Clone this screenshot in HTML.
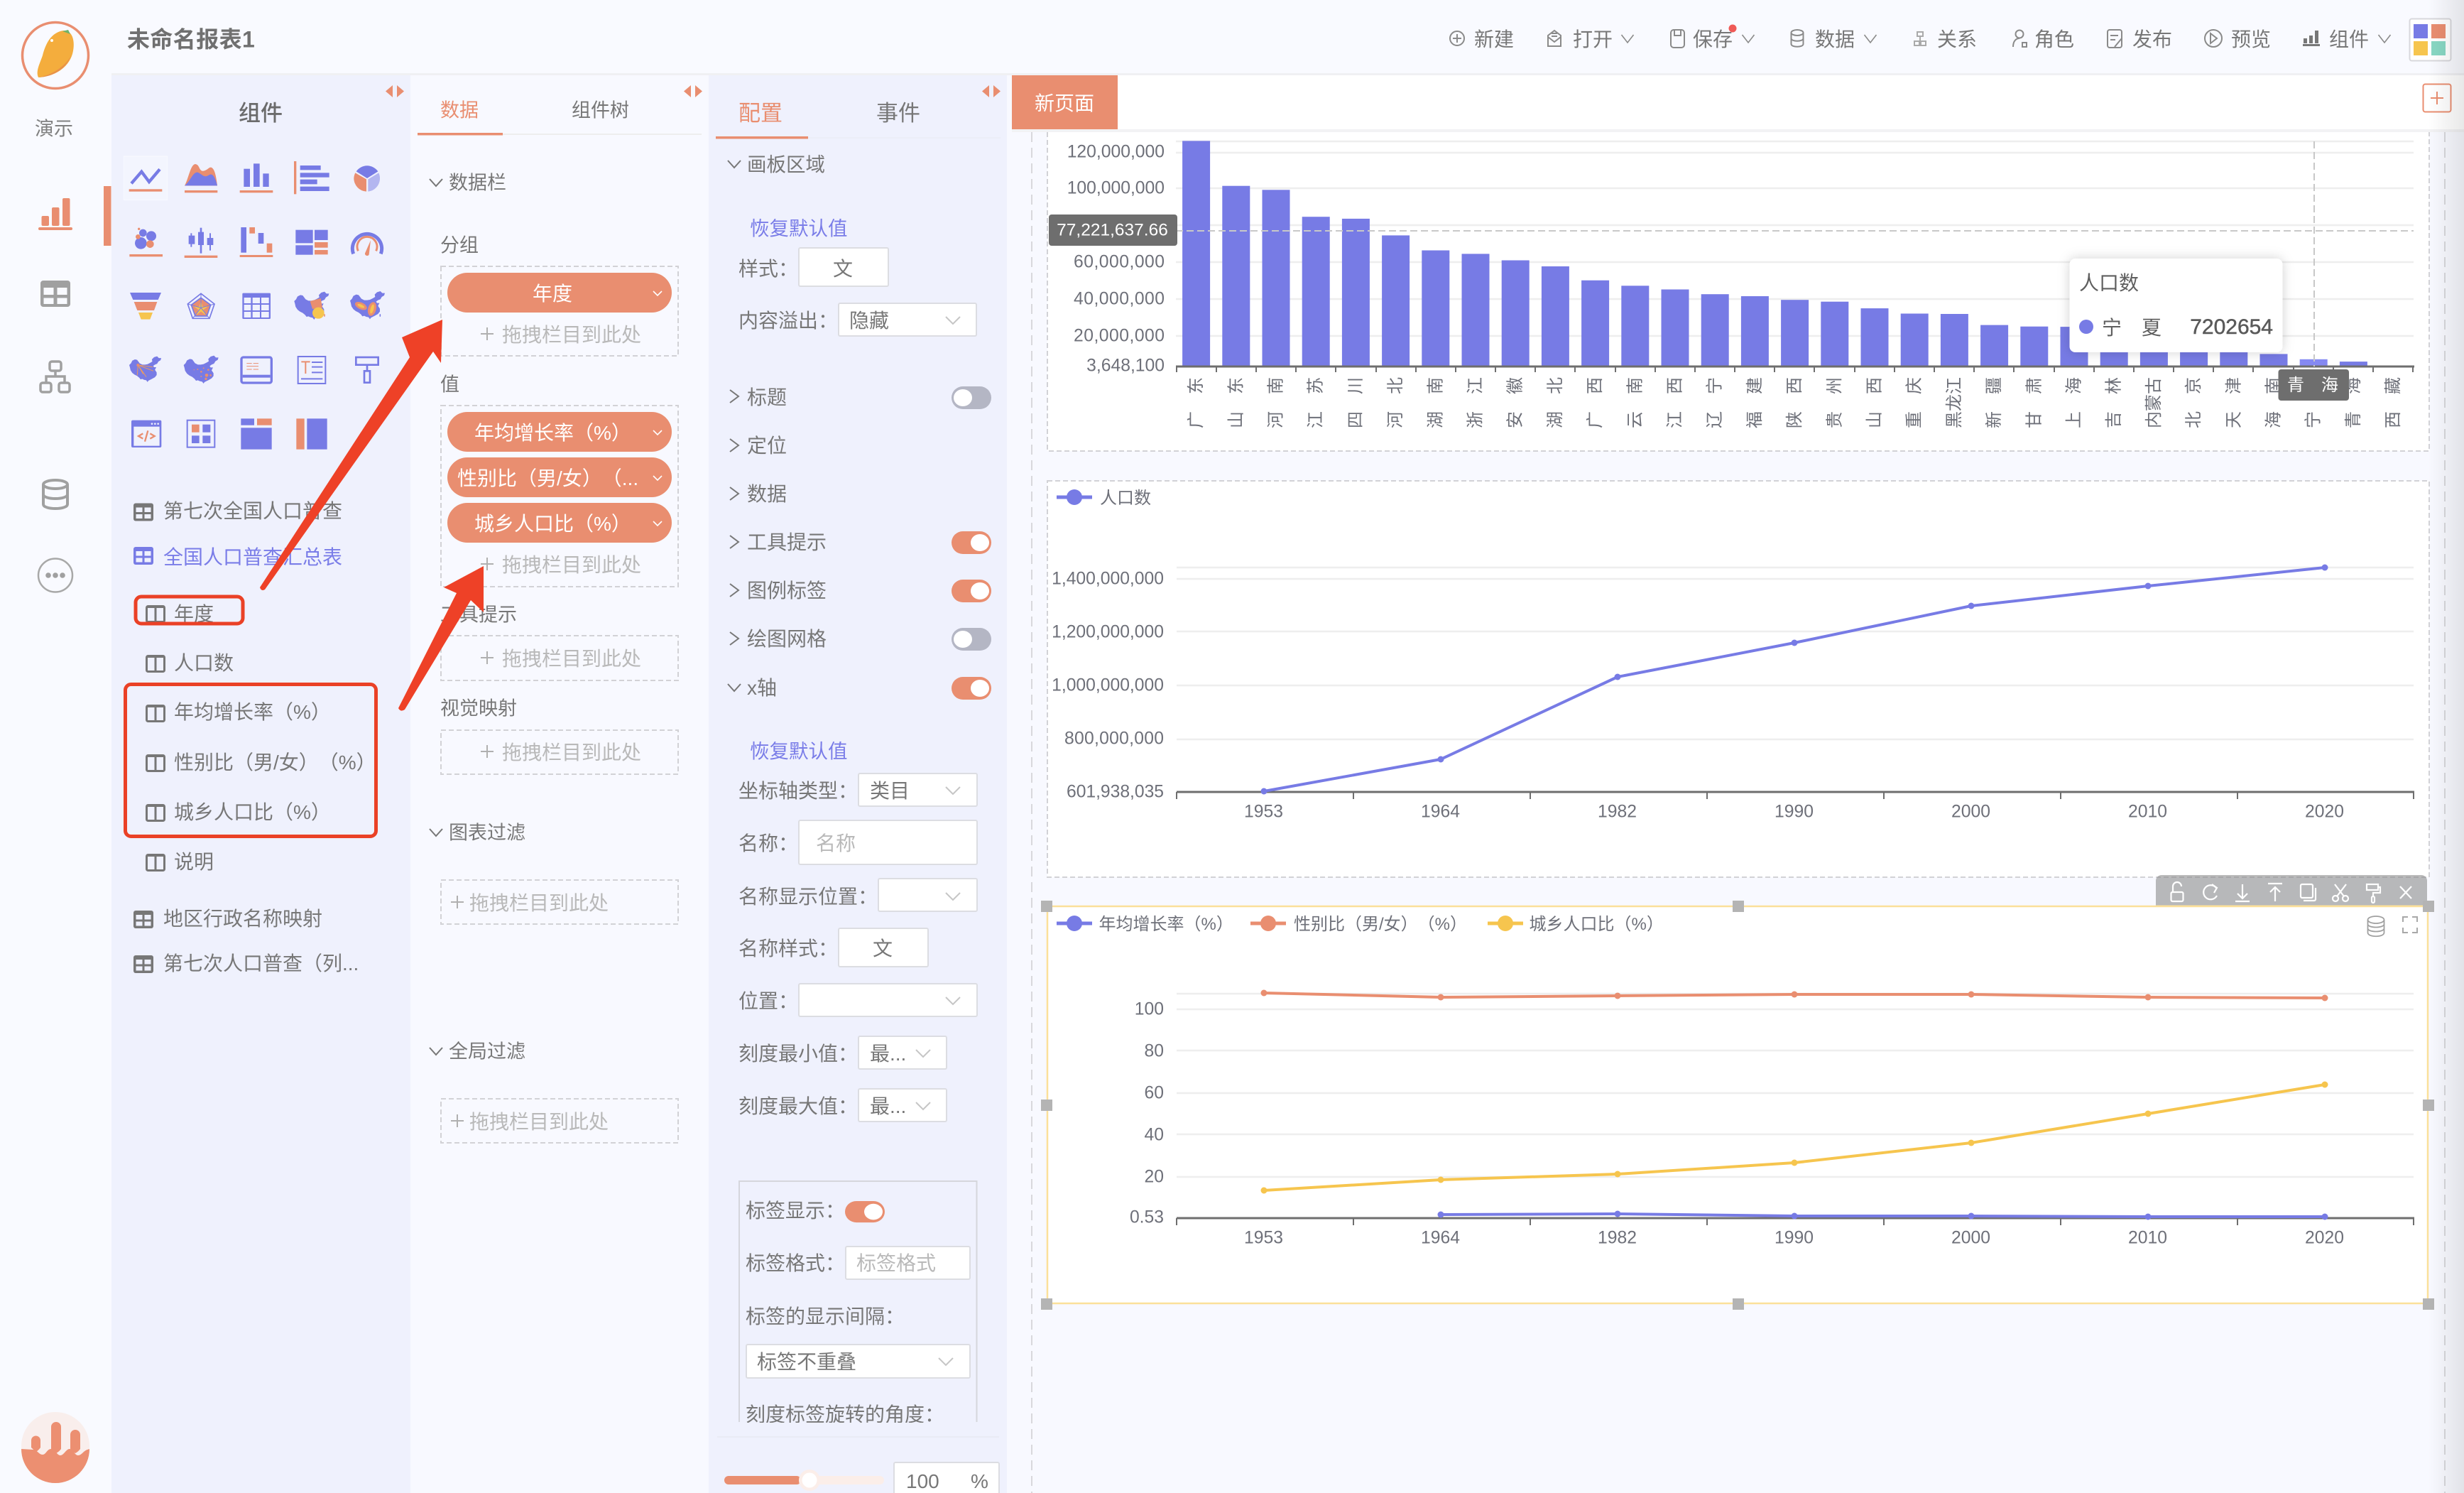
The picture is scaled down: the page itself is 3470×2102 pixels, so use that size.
<!DOCTYPE html>
<html lang="zh-CN"><head><meta charset="utf-8"><title>未命名报表1</title>
<style>
html,body{margin:0;padding:0;background:#f8f9ff}
svg{display:block}
svg text{font-family:"Liberation Sans","Noto Sans CJK SC",sans-serif;dominant-baseline:central;fill:#777;font-size:28px;text-spacing-trim:space-all}
svg text:not(.cat):not(.ax):not(.tk){transform:translate(-1px,1.5px)}
.o{fill:#e98e70}.b{fill:#777be5}
.ph text,text.ph{fill:#b9b9b9}
text.bl{fill:#7a7de8}
text.ax{font-size:24.7px;text-anchor:end;fill:#6e7079}
text.tk{font-size:24.7px;text-anchor:middle;fill:#6e7079;transform:translateX(-1.5px)}
text.cat{font-size:24px;text-anchor:end;fill:#6e7079}
text.lg{font-size:24px;fill:#6e7079}
text.wh{fill:#fff}
text.mid{text-anchor:middle}
.shx{transform:translateX(-1px)}
.ln{fill:none;stroke-linejoin:round}
.grid{stroke:#eeeeee;stroke-width:2.4}
.dash{fill:none;stroke:#d2d2d6;stroke-width:2;stroke-dasharray:7 4}
.box{fill:#fff;stroke:#dcdde2;stroke-width:2}
.chev{fill:none;stroke:#c6c6c6;stroke-width:2}
.tchev{fill:none;stroke:#8a8a8a;stroke-width:1.6}
.car{fill:none;stroke:#777;stroke-width:2}
.tool{fill:none;stroke:#fff;stroke-width:2.2}
.top{fill:none;stroke:#8a8a8a;stroke-width:2}
</style></head><body>
<svg xmlns="http://www.w3.org/2000/svg" width="3470" height="2102" viewBox="0 0 3470 2102">
<defs>
<g id="tb"><rect x="0" y="0" width="28" height="25" rx="3" fill="#777"/><rect x="3.5" y="6" width="9" height="6.5" fill="#eff1fd"/><rect x="15.5" y="6" width="9" height="6.5" fill="#eff1fd"/><rect x="3.5" y="15.5" width="9" height="6" fill="#eff1fd"/><rect x="15.5" y="15.5" width="9" height="6" fill="#eff1fd"/></g>
<g id="col"><rect x="1.5" y="1.5" width="25" height="22" rx="2" fill="none" stroke="#777" stroke-width="3"/><path d="M14 1v24" stroke="#777" stroke-width="3"/><path d="M1 3h26" stroke="#777" stroke-width="2"/></g>
<polyline id="chev" class="chev" points="-10,-5 0,5 10,-5"/>
<polyline id="cd" class="car" points="-9,-6 0,4 9,-6"/>
<polyline id="cr" class="car" points="-6,-9 6,0 -6,9"/>
<g id="lc"><path d="M-6 0 L0 6 L6 0" fill="none" stroke="#fff" stroke-width="1.6"/></g>
<g id="triL"><path d="M10 0V17L0 8.5Z" fill="#e98e70"/><path d="M16 0V17L26 8.5Z" fill="#e98e70"/></g>
<g id="ton"><rect x="0" y="0" width="56" height="32" rx="16" fill="#e98e70"/><ellipse cx="40" cy="16" rx="13" ry="12" fill="#fff"/></g>
<g id="tof"><rect x="0" y="0" width="56" height="32" rx="16" fill="#b4b6c4"/><ellipse cx="16" cy="16" rx="13" ry="12" fill="#fff"/></g>
<path id="cn" d="M0 40L8 32L14 20L26 14L36 16L42 24L48 32L60 38L72 38L84 36L96 30L106 24L104 14L114 4L128 0L136 8L147 8L144 18L134 24L128 34L118 38L110 44L114 50L124 50L118 62L126 74L126 86L118 96L104 104L96 108L88 112L84 118L78 110L68 108L60 104L52 106L46 98L36 90L24 84L14 76L6 64L3 50Z"/>
</defs>

<!-- base backgrounds -->
<rect width="3470" height="2102" fill="#f8f9ff"/>
<rect x="0" y="0" width="157" height="2102" fill="#f9faff"/>
<rect x="157" y="0" width="3313" height="104" fill="#f9faff"/>
<rect x="157" y="103" width="3313" height="3" fill="#f0f0f3"/>
<rect x="157" y="106" width="421" height="1996" fill="#eff1fd"/>
<rect x="578" y="106" width="420" height="1996" fill="#f8f9ff"/>
<rect x="998" y="106" width="420" height="1996" fill="#eff1fd"/>

<!-- left rail -->
<circle cx="78" cy="78" r="46.5" fill="none" stroke="#e98e70" stroke-width="3.5"/>
<path d="M54 109C50 100 56 90 60 78C64 62 72 45 90 43C104 43 106 62 102 76C96 96 76 108 54 109Z" fill="#f4ad3d"/>
<path d="M54 109C72 106 92 94 100 78C94 96 76 108 54 109Z" fill="#e8914a"/>
<path d="M88 44L96 42L99 48Z" fill="#6fb36a"/><circle cx="73" cy="57" r="2" fill="#fff"/>
<text x="77" y="180" font-size="27" text-anchor="middle" style="font-size:27px;fill:#808080">演示</text>
<rect x="146" y="262" width="10.500" height="84" fill="#e98e70"/>
<rect x="58.500" y="304" width="10.500" height="14" rx="2" fill="#e98e70"/><rect x="73" y="292" width="10.500" height="26" rx="2" fill="#e98e70"/><rect x="88" y="279" width="10.500" height="39" rx="2" fill="#e98e70"/><rect x="54" y="320" width="48" height="4" rx="2" fill="#e98e70"/>
<rect x="57" y="395" width="42" height="37" rx="4" fill="#a0a0a0"/><rect x="61.500" y="405" width="14" height="10" fill="#f9faff"/><rect x="80.500" y="405" width="14" height="10" fill="#f9faff"/><rect x="61.500" y="419.500" width="14" height="8.500" fill="#f9faff"/><rect x="80.500" y="419.500" width="14" height="8.500" fill="#f9faff"/>
<g fill="none" stroke="#a0a0a0" stroke-width="3.500"><rect x="70" y="509" width="16" height="13" rx="3"/><rect x="57" y="539" width="15" height="13" rx="3"/><rect x="83" y="539" width="15" height="13" rx="3"/><path d="M78 522v8M65 538v-8h26v8"/></g>
<g fill="none" stroke="#a0a0a0" stroke-width="4"><ellipse cx="78" cy="682" rx="17" ry="6"/><path d="M61 682v28c0 8 34 8 34 0v-28M61 696c0 8 34 8 34 0"/></g>
<ellipse cx="78" cy="810" rx="24" ry="23.500" fill="none" stroke="#a8a8a8" stroke-width="2.500"/><circle cx="68" cy="810" r="3.800" fill="#a0a0a0"/><circle cx="78" cy="810" r="3.800" fill="#a0a0a0"/><circle cx="88" cy="810" r="3.800" fill="#a0a0a0"/>
<circle cx="78" cy="2036" r="48" fill="#f9eeec"/>
<path d="M30 2040a48 48 0 0 0 96 0l-3 1c-6 2-8 8-13 8s-7-9-12-9-8 9-13 9-7-9-13-9-7 8-12 8-7-6-13-7z" fill="#ec8f71"/>
<path d="M44 2040v-10a6.500 6.500 0 0 1 13 0v10q-2 3-6 6-4-3-7-6z" fill="#ec8f71" transform="translate(0 -2)"/>
<path d="M72 2040v-31a7 7 0 0 1 14 0v31q-3 4-7 6-4-2-7-6z" fill="#ec8f71"/>
<path d="M99 2040v-20a7 7 0 0 1 14 0v20q-3 4-7 6-4-2-7-6z" fill="#ec8f71"/>

<!-- top bar -->
<text x="180" y="54" style="font-size:32px;font-weight:bold;fill:#707070;letter-spacing:.4px">未命名报表1</text>
<g>
<circle cx="2052" cy="54" r="10" class="top"/><path d="M2046 54h12M2052 48v12" class="top"/><text x="2077" y="54">新建</text>
<path d="M2180 50l9-7 9 7v15h-18zM2180 52l9 7 9-7M2185 47h8M2185 51h8" class="top"/><text x="2216" y="54">打开</text><polyline class="tchev" points="2283.500,49 2292,60 2300.500,49"/>
<rect x="2353" y="42" width="19" height="25" rx="4" class="top"/><rect x="2358" y="42" width="9" height="8" class="top"/><text x="2385" y="54">保存</text><circle cx="2440" cy="40" r="5.500" fill="#ef5a57"/><polyline class="tchev" points="2453.500,49 2462,60 2470.500,49"/>
<ellipse cx="2531" cy="46" rx="8.500" ry="4" class="top"/><path d="M2522.500 46v16c0 5 17 5 17 0v-16M2522.500 54c0 5 17 5 17 0" class="top"/><text x="2557" y="54">数据</text><polyline class="tchev" points="2625.500,49 2634,60 2642.500,49"/>
<g class="top" style="stroke:#aaa"><rect x="2700" y="45" width="8" height="6"/><rect x="2696" y="58" width="7" height="6"/><rect x="2705" y="58" width="7" height="6"/><path d="M2704 51v7"/></g><text x="2729" y="54">关系</text>
<circle cx="2844" cy="48" r="5.500" class="top"/><path d="M2835 66c0-8 4-12 9-12M2848 60h6v6h-6z" class="top"/><text x="2866" y="54">角色</text>
<rect x="2968" y="42" width="20" height="25" rx="3" class="top"/><path d="M2972 50h11M2972 56h7M2978 66l10-12" class="top"/><text x="3004" y="54">发布</text>
<circle cx="3117" cy="54" r="12" class="top"/><path d="M3113 47l9 7-9 7z" class="top"/><text x="3143" y="54">预览</text>
<rect x="3243" y="62" width="24" height="3" fill="#777"/><rect x="3244" y="54" width="5" height="7" fill="#777"/><rect x="3252" y="50" width="5" height="11" fill="#777"/><rect x="3260" y="43" width="5" height="18" fill="#777"/><text x="3281" y="54">组件</text><polyline class="tchev" points="3349.500,49 3358,60 3366.500,49"/>
</g>
<rect x="3393.500" y="26.500" width="58" height="59" rx="3" fill="#fff" stroke="#d8d8dc" stroke-width="2"/>
<rect x="3399" y="34" width="20" height="20" fill="#777be5"/><rect x="3424" y="34" width="20" height="20" fill="#e98e70"/><rect x="3399" y="58" width="20" height="20" fill="#f6c54e"/><rect x="3424" y="58" width="20" height="20" fill="#88d7c3"/>

<!-- component panel -->
<use href="#triL" x="543" y="120"/>
<text x="337" y="158" style="font-size:31px;font-weight:500;fill:#6b6b6b">组件</text>
<g transform="translate(140 200) scale(.33333)">
<rect x="103" y="60" width="184" height="185" fill="#f3f5fe" stroke="#f8f9ff" stroke-width="3"/>
<polyline points="135,175 178,125 210,168 255,115" fill="none" stroke="#777be5" stroke-width="13"/>
<g class="o"><rect x="125" y="199" width="140" height="10"/><rect x="360" y="204" width="139" height="10"/><rect x="593" y="204" width="140" height="10"/><rect x="822" y="81" width="10" height="139"/><rect x="127" y="474" width="140" height="10"/><rect x="359" y="479" width="140" height="10"/><rect x="593" y="477" width="140" height="9"/><rect x="634" y="360" width="23" height="26"/><rect x="707" y="428" width="23" height="39"/><rect x="909" y="423" width="56" height="23"/><rect x="909" y="456" width="56" height="19"/><rect x="832" y="1168" width="34" height="130"/><rect x="666" y="1168" width="62" height="28"/><rect x="390" y="1193" width="32" height="33"/></g>
<path d="M360 184C378 150 385 95 405 93C425 95 420 125 440 122C460 118 465 100 477 110C490 120 495 160 498 184Z" class="o"/>
<path d="M360 184C385 165 395 125 415 128C435 135 440 155 465 138C482 130 492 160 498 184Z" class="b"/>
<g class="b"><rect x="610" y="113" width="26" height="76"/><rect x="651" y="91" width="26" height="98"/><rect x="691" y="133" width="25" height="56"/>
<rect x="848" y="99" width="87" height="19"/><rect x="848" y="130" width="123" height="19"/><rect x="848" y="158" width="72" height="20"/><rect x="848" y="188" width="123" height="19"/>
<circle cx="184" cy="384" r="16"/><circle cx="219" cy="397" r="21"/><circle cx="175" cy="427" r="25"/>
<rect x="385" y="385" width="6" height="58"/><rect x="377" y="395" width="26" height="36"/><rect x="425" y="362" width="8" height="108"/><rect x="417" y="380" width="24" height="55"/><rect x="465" y="385" width="6" height="73"/><rect x="455" y="405" width="26" height="30"/>
<rect x="598" y="360" width="23" height="107"/><rect x="671" y="384" width="23" height="45"/>
<rect x="829" y="371" width="73" height="56"/><rect x="829" y="436" width="73" height="40"/><rect x="909" y="371" width="56" height="43"/>
<rect x="598" y="1168" width="56" height="28"/><rect x="598" y="1207" width="130" height="91"/><rect x="877" y="1168" width="85" height="130"/>
</g>
<path d="M1131 153L1085 124A56 56 0 0 1 1177 124Z" class="b"/><path d="M1128 157L1128 209A56 56 0 0 1 1075 153A55 55 0 0 1 1081 130Z" class="o"/><path d="M1135 157L1180 130A56 56 0 0 1 1135 209Z" fill="#b3b6f0"/>
<circle cx="163" cy="400" r="10" class="o"/><circle cx="214" cy="431" r="16" class="o"/><circle cx="167" cy="367" r="5" class="o"/>
<path d="M1073 472A62 62 0 1 1 1189 472" fill="none" stroke="#777be5" stroke-width="15"/><path d="M1093 460A42 42 0 1 1 1169 460" fill="none" stroke="#e98e70" stroke-width="9"/><path d="M1146 415L1122 470A9 9 0 0 0 1139 475Z" class="o"/>
<path d="M129 636H261L248 666H142Z" class="b"/><path d="M146 675H244L231 711H160Z" class="o"/><path d="M165 720H225L214 749H176Z" fill="#f6c54e"/>
<path d="M429 640L486 684L465 745H394L373 684Z" fill="none" stroke="#777be5" stroke-width="5"/><path d="M429 658L470 688L454 735H405L388 688Z" fill="#e98e70" stroke="#777be5" stroke-width="5"/><path d="M429 672L436 695H458L440 708L448 730L429 716L410 730L418 708L400 695H422Z" fill="#f6c54e"/><path d="M429 640V700M373 684L429 700M486 684L429 700M394 745L429 700M465 745L429 700" stroke="#777be5" stroke-width="3"/>
<rect x="604" y="638" width="119" height="109" rx="4" class="b"/><g fill="#eff1fd"><rect x="611" y="657" width="29" height="24"/><rect x="647" y="657" width="31" height="24"/><rect x="684" y="657" width="32" height="24"/><rect x="611" y="687" width="29" height="24"/><rect x="647" y="687" width="31" height="24"/><rect x="684" y="687" width="32" height="24"/><rect x="611" y="717" width="29" height="24"/><rect x="647" y="717" width="31" height="24"/><rect x="684" y="717" width="32" height="24"/></g>
<use href="#cn" x="823" y="632" class="b"/><path d="M890 672L935 660L942 700L900 705Z" class="o"/><ellipse cx="925" cy="722" rx="25" ry="24" fill="#f6c54e"/><ellipse cx="951" cy="732" rx="2.500" ry="6" class="o"/>
<use href="#cn" x="1059" y="630" class="b"/><ellipse cx="1105" cy="692" rx="27" ry="14" transform="rotate(25 1105 692)" fill="#e98e70"/><ellipse cx="1105" cy="692" rx="16" ry="6" transform="rotate(25 1105 692)" fill="#f6c54e"/><ellipse cx="1152" cy="705" rx="17" ry="30" transform="rotate(15 1152 705)" fill="#e98e70"/><ellipse cx="1152" cy="705" rx="7" ry="20" transform="rotate(15 1152 705)" fill="#f6c54e"/><ellipse cx="1186" cy="732" rx="2.500" ry="6" class="b"/>
<use href="#cn" transform="translate(126 905) scale(.92)" class="b"/><path d="M163 942L225 950M163 942L228 967M163 942L198 992M163 942L160 985M163 942L185 980" stroke="#ec9a5f" stroke-width="3"/><circle cx="163" cy="942" r="6" class="o"/>
<use href="#cn" x="356" y="902" class="b"/><g class="o"><circle cx="453" cy="985" r="7"/><circle cx="430" cy="970" r="4"/><circle cx="460" cy="962" r="4"/><circle cx="440" cy="955" r="3"/><circle cx="470" cy="985" r="4"/><circle cx="450" cy="1000" r="5"/><circle cx="415" cy="960" r="3"/><circle cx="400" cy="962" r="2"/><circle cx="430" cy="990" r="3"/></g>
<rect x="600" y="909" width="127" height="108" rx="8" fill="none" stroke="#777be5" stroke-width="10"/><rect x="605" y="983" width="117" height="12" class="b"/><path d="M622 935h22M650 935h22M622 947h50M622 960h22M650 960h22" stroke="#e98e70" stroke-width="3"/>
<rect x="839" y="906" width="116" height="114" fill="none" stroke="#777be5" stroke-width="6"/><path d="M853 928h37M871 928v50" stroke="#e98e70" stroke-width="6"/><path d="M897 930h46M897 950h46M897 973h46M852 1000h91" stroke="#777be5" stroke-width="6"/>
<rect x="1084" y="909" width="94" height="32" fill="none" stroke="#777be5" stroke-width="8"/><rect x="1119" y="967" width="24" height="49" fill="none" stroke="#777be5" stroke-width="8"/><path d="M1131 943v24" stroke="#777be5" stroke-width="8"/>
<rect x="135" y="1175" width="127" height="115" rx="6" class="b"/><rect x="145" y="1202" width="109" height="81" fill="#eff1fd"/><circle cx="222" cy="1190" r="4" fill="#eff1fd"/><circle cx="235" cy="1190" r="4" fill="#eff1fd"/><circle cx="248" cy="1190" r="4" fill="#eff1fd"/><path d="M184 1231L165 1242L184 1253M214 1231L233 1242L214 1253M205 1219L192 1265" fill="none" stroke="#e98e70" stroke-width="7"/>
<rect x="371" y="1175" width="116" height="114" fill="none" stroke="#777be5" stroke-width="6"/><rect x="436" y="1193" width="33" height="33" class="b"/><rect x="390" y="1240" width="32" height="32" class="b"/><rect x="436" y="1240" width="33" height="32" class="b"/>
</g>
<!-- tree -->
<use href="#tb" x="188" y="708.500"/><text x="231" y="718">第七次全国人口普查</text>
<rect x="188" y="770" width="28" height="25" rx="3" fill="#777be5"/><rect x="191.500" y="776" width="9" height="6.500" fill="#eff1fd"/><rect x="203.500" y="776" width="9" height="6.500" fill="#eff1fd"/><rect x="191.500" y="785.500" width="9" height="6" fill="#eff1fd"/><rect x="203.500" y="785.500" width="9" height="6" fill="#eff1fd"/>
<text x="231" y="783" class="bl">全国人口普查汇总表</text>
<use href="#col" x="205" y="852"/><text x="246" y="863">年度</text>
<use href="#col" x="205" y="922"/><text x="246" y="932">人口数</text>
<use href="#col" x="205" y="992"/><text x="246" y="1001">年均增长率（%）</text>
<use href="#col" x="205" y="1062"/><text x="246" y="1072">性别比（男/女）（%）</text>
<use href="#col" x="205" y="1132"/><text x="246" y="1142">城乡人口比（%）</text>
<use href="#col" x="205" y="1202"/><text x="246" y="1212">说明</text>
<use href="#tb" x="188" y="1282"/><text x="231" y="1292">地区行政名称映射</text>
<use href="#tb" x="188" y="1345"/><text x="231" y="1355">第七次人口普查（列...</text>

<!-- data panel -->
<text x="621" y="154" style="fill:#e98e70;font-size:27px">数据</text><text x="806" y="154" style="font-size:27px">组件树</text>
<rect x="588" y="188" width="400" height="2" fill="#eeeeee"/><rect x="588" y="187" width="120" height="3.500" fill="#e98e70"/>
<use href="#triL" x="963" y="120"/>
<use href="#cd" x="614" y="258"/><text x="633" y="256" style="font-size:27px">数据栏</text>
<text x="621" y="344" style="font-size:27px">分组</text>
<rect x="621" y="375" width="334" height="126" class="dash"/>
<rect x="630" y="384" width="316" height="56" rx="28" class="o"/><text x="779" y="412" class="wh mid">年度</text><use href="#lc" x="926" y="410"/>
<g class="ph"><path d="M677 470h18M686 461v18" stroke="#b0b0b0" stroke-width="2"/><text x="708" y="470">拖拽栏目到此处</text></g>
<text x="621" y="540" style="font-size:27px">值</text>
<rect x="621" y="571" width="334" height="255" class="dash"/>
<rect x="630" y="580" width="316" height="56" rx="28" class="o"/><text x="669" y="608" class="wh">年均增长率（%）</text><use href="#lc" x="926" y="606"/>
<rect x="630" y="644" width="316" height="56" rx="28" class="o"/><text x="645" y="672" class="wh">性别比（男/女）（...</text><use href="#lc" x="926" y="670"/>
<rect x="630" y="708" width="316" height="56" rx="28" class="o"/><text x="669" y="736" class="wh">城乡人口比（%）</text><use href="#lc" x="926" y="734"/>
<g class="ph"><path d="M677 794h18M686 785v18" stroke="#b0b0b0" stroke-width="2"/><text x="708" y="794">拖拽栏目到此处</text></g>
<text x="621" y="864" style="font-size:27px">工具提示</text>
<rect x="621" y="895" width="334" height="63" class="dash"/>
<g class="ph"><path d="M677 926h18M686 917v18" stroke="#b0b0b0" stroke-width="2"/><text x="708" y="926">拖拽栏目到此处</text></g>
<text x="621" y="996" style="font-size:27px">视觉映射</text>
<rect x="621" y="1028" width="334" height="62" class="dash"/>
<g class="ph"><path d="M677 1058h18M686 1049v18" stroke="#b0b0b0" stroke-width="2"/><text x="708" y="1058">拖拽栏目到此处</text></g>
<use href="#cd" x="614" y="1173"/><text x="633" y="1171" style="font-size:27px">图表过滤</text>
<rect x="621" y="1239" width="334" height="62" class="dash"/>
<g class="ph"><path d="M635 1270h18M644 1261v18" stroke="#b0b0b0" stroke-width="2"/><text x="662" y="1270">拖拽栏目到此处</text></g>
<use href="#cd" x="614" y="1481"/><text x="633" y="1479" style="font-size:27px">全局过滤</text>
<rect x="621" y="1547" width="334" height="62" class="dash"/>
<g class="ph"><path d="M635 1578h18M644 1569v18" stroke="#b0b0b0" stroke-width="2"/><text x="662" y="1578">拖拽栏目到此处</text></g>

<!-- config panel -->
<text x="1041" y="158" style="fill:#e98e70;font-size:31px">配置</text><text x="1235" y="158" style="font-size:31px">事件</text>
<rect x="1008" y="193" width="401" height="2" fill="#eceef8"/><rect x="1008" y="192" width="130" height="3.500" fill="#e98e70"/>
<use href="#triL" x="1383" y="120"/>
<use href="#cd" x="1034" y="232"/><text x="1053" y="230" style="font-size:27.500px">画板区域</text>
<text x="1057" y="320" class="bl" style="font-size:27.500px">恢复默认值</text>
<text x="1041" y="377">样式：</text><rect x="1125" y="349" width="126" height="54" rx="2" class="box"/><text x="1188" y="377" class="mid">文</text>
<text x="1041" y="450">内容溢出：</text><rect x="1181" y="427" width="194" height="46" rx="2" class="box"/><text x="1197" y="450">隐藏</text><use href="#chev" x="1342" y="451"/>
<use href="#cr" x="1034" y="558"/><text x="1053" y="558">标题</text><use href="#tof" x="1340" y="544"/>
<use href="#cr" x="1034" y="627"/><text x="1053" y="626">定位</text>
<use href="#cr" x="1034" y="695"/><text x="1053" y="694">数据</text>
<use href="#cr" x="1034" y="763"/><text x="1053" y="762">工具提示</text><use href="#ton" x="1340" y="748"/>
<use href="#cr" x="1034" y="831"/><text x="1053" y="830">图例标签</text><use href="#ton" x="1340" y="816"/>
<use href="#cr" x="1034" y="899"/><text x="1053" y="898">绘图网格</text><use href="#tof" x="1340" y="884"/>
<use href="#cd" x="1034" y="969"/><text x="1053" y="967">x轴</text><use href="#ton" x="1340" y="953"/>
<text x="1057" y="1056" class="bl" style="font-size:27.500px">恢复默认值</text>
<text x="1041" y="1112">坐标轴类型：</text><rect x="1209" y="1089" width="167" height="46" rx="2" class="box"/><text x="1226" y="1112">类目</text><use href="#chev" x="1342" y="1113"/>
<text x="1041" y="1186">名称：</text><rect x="1125" y="1155" width="251" height="62" rx="2" class="box"/><text x="1150" y="1186" class="ph">名称</text>
<text x="1041" y="1261">名称显示位置：</text><rect x="1237" y="1237" width="139" height="46" rx="2" class="box"/><use href="#chev" x="1342" y="1262"/>
<text x="1041" y="1334">名称样式：</text><rect x="1181" y="1307" width="126" height="54" rx="2" class="box"/><text x="1244" y="1334" class="mid">文</text>
<text x="1041" y="1408">位置：</text><rect x="1125" y="1385" width="251" height="46" rx="2" class="box"/><use href="#chev" x="1342" y="1409"/>
<text x="1041" y="1482">刻度最小值：</text><rect x="1209" y="1459" width="124" height="46" rx="2" class="box"/><text x="1226" y="1482">最...</text><use href="#chev" x="1300" y="1483"/>
<text x="1041" y="1556">刻度最大值：</text><rect x="1209" y="1533" width="124" height="46" rx="2" class="box"/><text x="1226" y="1556">最...</text><use href="#chev" x="1300" y="1557"/>
<path d="M1041 2002V1663H1375.500V2002" fill="none" stroke="#d5d6dc" stroke-width="2"/>
<text x="1051" y="1703">标签显示：</text><use href="#ton" transform="translate(1190 1691) scale(1 .94)"/>
<text x="1051" y="1777">标签格式：</text><rect x="1191" y="1755" width="175" height="46" rx="2" class="box"/><text x="1207" y="1777" class="ph">标签格式</text>
<text x="1051" y="1852">标签的显示间隔：</text>
<rect x="1051" y="1893" width="315" height="47" rx="2" class="box"/><text x="1067" y="1916">标签不重叠</text><use href="#chev" x="1332" y="1917"/>
<text x="1051" y="1990">刻度标签旋转的角度：</text>
<rect x="1012" y="2003" width="396" height="40" fill="#eff1fd"/>
<rect x="1010" y="2022" width="397" height="2" fill="#e9ebf5"/>
<rect x="1020" y="2078" width="225" height="12" rx="6" fill="#fbeee9"/><rect x="1020" y="2078" width="108" height="12" rx="6" fill="#e98e70"/>
<circle cx="1140" cy="2084" r="15" fill="#fbeee9"/><circle cx="1140" cy="2084" r="10.500" fill="#fff"/>
<rect x="1259" y="2059" width="148" height="60" rx="2" class="box"/><text x="1277" y="2084">100</text><text x="1368" y="2084">%</text>

<!-- tab bar -->
<rect x="1425" y="106" width="2045" height="76" fill="#fff"/>
<rect x="1425" y="182" width="2045" height="4" fill="#f2f2f4"/>
<rect x="1425" y="106" width="149" height="76" fill="#e98e70"/>
<text x="1458" y="144" class="wh">新页面</text>
<rect x="3412.500" y="118.500" width="39" height="39" rx="3" fill="#fff" stroke="#e98e70" stroke-width="2"/><path d="M3423 138h18M3432 129v18" stroke="#e98e70" stroke-width="2"/>

<!-- canvas guides -->
<path d="M1453 186V2102M3443 186V2102" stroke="#d8d8dc" stroke-width="2" stroke-dasharray="14 8" fill="none"/>

<!-- chart 1 -->
<rect x="1475" y="186" width="1946" height="449" fill="#fff"/>
<path d="M1475 186V635H3421V186" class="dash"/>
<g class="grid"><path d="M1656 199H3399M1656 215H3399M1656 265H3399M1656 317H3399M1656 369H3399M1656 421H3399M1656 473H3399"/></g>
<g class="b">
<rect x="1665.100" y="198.400" width="39" height="316.600"/><rect x="1721.300" y="261.700" width="39" height="253.300"/><rect x="1777.500" y="267.300" width="39" height="247.700"/><rect x="1833.700" y="305.200" width="39" height="209.800"/><rect x="1889.900" y="307.900" width="39" height="207.100"/><rect x="1946.100" y="331.400" width="39" height="183.600"/><rect x="2002.300" y="352.500" width="39" height="162.500"/><rect x="2058.500" y="357.400" width="39" height="157.600"/><rect x="2114.700" y="366.500" width="39" height="148.500"/><rect x="2170.900" y="375" width="39" height="140"/><rect x="2227.100" y="394.700" width="39" height="120.300"/><rect x="2283.300" y="402.300" width="39" height="112.700"/><rect x="2339.500" y="407.500" width="39" height="107.500"/><rect x="2395.700" y="414.200" width="39" height="100.800"/><rect x="2451.900" y="417" width="39" height="98"/><rect x="2508.100" y="422.200" width="39" height="92.800"/><rect x="2564.300" y="424.700" width="39" height="90.300"/><rect x="2620.500" y="434.100" width="39" height="80.900"/><rect x="2676.700" y="441.500" width="39" height="73.500"/><rect x="2732.900" y="442" width="39" height="73"/><rect x="2789.100" y="457.600" width="39" height="57.400"/><rect x="2845.300" y="459.700" width="39" height="55.300"/><rect x="2901.500" y="460.100" width="39" height="54.900"/><rect x="2957.700" y="462.200" width="39" height="52.800"/><rect x="3013.900" y="462.200" width="39" height="52.800"/><rect x="3070.100" y="467.800" width="39" height="47.200"/><rect x="3126.300" y="488.600" width="39" height="26.400"/><rect x="3182.500" y="498.400" width="39" height="16.600"/>
<rect x="3238.700" y="505.800" width="39" height="9.200" style="fill:#8589f2"/><rect x="3294.900" y="509.100" width="39" height="5.900"/>
</g>
<path d="M1656 516H3400" stroke="#6e6e6e" stroke-width="3"/>
<path d="M1657 516v8M1713 516v8M1769 516v8M1825 516v8M1881 516v8M1938 516v8M1994 516v8M2050 516v8M2106 516v8M2162 516v8M2218 516v8M2275 516v8M2331 516v8M2387 516v8M2443 516v8M2499 516v8M2555 516v8M2612 516v8M2668 516v8M2724 516v8M2780 516v8M2836 516v8M2893 516v8M2949 516v8M3005 516v8M3061 516v8M3117 516v8M3173 516v8M3230 516v8M3286 516v8M3342 516v8M3398 516v8" stroke="#6e6e6e" stroke-width="2"/>
<text class="ax" x="1640" y="214">120,000,000</text><text class="ax" x="1640" y="265">100,000,000</text><text class="ax" x="1640" y="369" textLength="128">60,000,000</text><text class="ax" x="1640" y="421" textLength="128">40,000,000</text><text class="ax" x="1640" y="473" textLength="128">20,000,000</text><text class="ax" x="1640" y="515">3,648,100</text>
<g>
<text class="cat" transform="translate(1684.600 531) rotate(-90)">广　东</text><text class="cat" transform="translate(1740.800 531) rotate(-90)">山　东</text><text class="cat" transform="translate(1797 531) rotate(-90)">河　南</text><text class="cat" transform="translate(1853.200 531) rotate(-90)">江　苏</text><text class="cat" transform="translate(1909.400 531) rotate(-90)">四　川</text><text class="cat" transform="translate(1965.600 531) rotate(-90)">河　北</text><text class="cat" transform="translate(2021.800 531) rotate(-90)">湖　南</text><text class="cat" transform="translate(2078 531) rotate(-90)">浙　江</text><text class="cat" transform="translate(2134.200 531) rotate(-90)">安　徽</text><text class="cat" transform="translate(2190.400 531) rotate(-90)">湖　北</text><text class="cat" transform="translate(2246.600 531) rotate(-90)">广　西</text><text class="cat" transform="translate(2302.800 531) rotate(-90)">云　南</text><text class="cat" transform="translate(2359 531) rotate(-90)">江　西</text><text class="cat" transform="translate(2415.200 531) rotate(-90)">辽　宁</text><text class="cat" transform="translate(2471.400 531) rotate(-90)">福　建</text><text class="cat" transform="translate(2527.600 531) rotate(-90)">陕　西</text><text class="cat" transform="translate(2583.800 531) rotate(-90)">贵　州</text><text class="cat" transform="translate(2640 531) rotate(-90)">山　西</text><text class="cat" transform="translate(2696.200 531) rotate(-90)">重　庆</text><text class="cat" transform="translate(2752.400 531) rotate(-90)">黑龙江</text><text class="cat" transform="translate(2808.600 531) rotate(-90)">新　疆</text><text class="cat" transform="translate(2864.800 531) rotate(-90)">甘　肃</text><text class="cat" transform="translate(2921 531) rotate(-90)">上　海</text><text class="cat" transform="translate(2977.200 531) rotate(-90)">吉　林</text><text class="cat" transform="translate(3033.400 531) rotate(-90)">内蒙古</text><text class="cat" transform="translate(3089.600 531) rotate(-90)">北　京</text><text class="cat" transform="translate(3145.800 531) rotate(-90)">天　津</text><text class="cat" transform="translate(3202 531) rotate(-90)">海　南</text><text class="cat" transform="translate(3258.200 531) rotate(-90)">宁　夏</text><text class="cat" transform="translate(3314.400 531) rotate(-90)">青　海</text><text class="cat" transform="translate(3370.600 531) rotate(-90)">西　藏</text>
</g>
<path d="M1656 325H3399" stroke="#c8c8c8" stroke-width="2" stroke-dasharray="10 5"/>
<path d="M3259 199V516" stroke="#c8c8c8" stroke-width="2" stroke-dasharray="10 5"/>
<rect x="1477" y="302" width="181" height="44" rx="4" fill="#6e6e6e"/><text x="1567.500" y="322.500" class="wh mid" style="font-size:24.500px">77,221,637.66</text>
<rect x="3208.500" y="520" width="99.500" height="44" rx="4" fill="#6e6e6e"/><text x="3258" y="541" class="wh mid" style="font-size:24px">青　海</text>
<rect x="2914.500" y="364" width="300" height="132" rx="8" fill="#fff" style="filter:drop-shadow(0 0 8px rgba(0,0,0,.18))"/>
<text x="2929" y="397" style="font-size:28px;fill:#5f5f5f">人口数</text>
<ellipse cx="2938" cy="460" rx="10" ry="10" fill="#777be5"/>
<text x="2961" y="460" style="font-size:28px;fill:#5f5f5f">宁　夏</text>
<text x="3202" y="459" style="font-size:30px;fill:#5a5a5a;stroke:#5a5a5a;stroke-width:.5;text-anchor:end">7202654</text>

<!-- chart 2 -->
<rect x="1475" y="677" width="1946" height="558" fill="#fff" class="dash" style="fill:#fff"/>
<g class="grid"><path d="M1657 799H3399M1657 815H3399M1657 889H3399M1657 965H3399M1657 1041H3399"/></g>
<path d="M1488 700H1538" stroke="#777be5" stroke-width="5"/><circle cx="1513" cy="700" r="11" fill="#777be5"/><text class="lg" x="1550" y="700">人口数</text>
<text class="ax" x="1639" y="815">1,400,000,000</text><text class="ax" x="1639" y="890">1,200,000,000</text><text class="ax" x="1639" y="965">1,000,000,000</text><text class="ax" x="1639" y="1040" textLength="140">800,000,000</text><text class="ax" x="1639" y="1115" textLength="137">601,938,035</text>
<path d="M1657 1115H3400" stroke="#6e6e6e" stroke-width="3"/>
<path d="M1657 1115v10M1906 1115v10M2155 1115v10M2404 1115v10M2653 1115v10M2902 1115v10M3151 1115v10M3399 1115v10" stroke="#6e6e6e" stroke-width="2"/>
<text class="tk" x="1781" y="1143">1953</text><text class="tk" x="2030" y="1143">1964</text><text class="tk" x="2279" y="1143">1982</text><text class="tk" x="2528" y="1143">1990</text><text class="tk" x="2777" y="1143">2000</text><text class="tk" x="3026" y="1143">2010</text><text class="tk" x="3275" y="1143">2020</text>
<g class="shx">
<polyline class="ln" stroke="#777be5" stroke-width="4" points="1781,1114 2030,1069 2279,953 2528,905 2777,853 3026,825 3275,799"/>
<g class="b"><circle cx="1781" cy="1114" r="4.500"/><circle cx="2030" cy="1069" r="4.500"/><circle cx="2279" cy="953" r="4.500"/><circle cx="2528" cy="905" r="4.500"/><circle cx="2777" cy="853" r="4.500"/><circle cx="3026" cy="825" r="4.500"/><circle cx="3275" cy="799" r="4.500"/></g>
</g>

<!-- chart 3 -->
<rect x="1475" y="1276" width="1944" height="559" fill="#fff" stroke="#fbe09a" stroke-width="2.500"/>
<g class="grid"><path d="M1657 1399H3399M1657 1421H3399M1657 1479H3399M1657 1539H3399M1657 1597H3399M1657 1657H3399"/></g>
<path d="M1488 1300H1538" stroke="#777be5" stroke-width="5"/><circle cx="1513" cy="1300" r="11" fill="#777be5"/><text class="lg" x="1548.500" y="1300">年均增长率（%）</text>
<path d="M1761 1300H1811" stroke="#e98e70" stroke-width="5"/><circle cx="1786" cy="1300" r="11" fill="#e98e70"/><text class="lg" x="1823" y="1300">性别比（男/女）（%）</text>
<path d="M2095 1300H2145" stroke="#f6c54e" stroke-width="5"/><circle cx="2120" cy="1300" r="11" fill="#f6c54e"/><text class="lg" x="2154.500" y="1300">城乡人口比（%）</text>
<text class="ax" x="1639" y="1421">100</text><text class="ax" x="1639" y="1480">80</text><text class="ax" x="1639" y="1539">60</text><text class="ax" x="1639" y="1598">40</text><text class="ax" x="1639" y="1657">20</text><text class="ax" x="1639" y="1714">0.53</text>
<path d="M1657 1715H3400" stroke="#6e6e6e" stroke-width="3"/>
<path d="M1657 1715v10M1906 1715v10M2155 1715v10M2404 1715v10M2653 1715v10M2902 1715v10M3151 1715v10M3399 1715v10" stroke="#6e6e6e" stroke-width="2"/>
<text class="tk" x="1781" y="1743">1953</text><text class="tk" x="2030" y="1743">1964</text><text class="tk" x="2279" y="1743">1982</text><text class="tk" x="2528" y="1743">1990</text><text class="tk" x="2777" y="1743">2000</text><text class="tk" x="3026" y="1743">2010</text><text class="tk" x="3275" y="1743">2020</text>
<g class="shx">
<polyline class="ln" stroke="#e98e70" stroke-width="4" points="1781,1398 2030,1404 2279,1402 2528,1400 2777,1400 3026,1404 3275,1405"/>
<polyline class="ln" stroke="#f6c54e" stroke-width="4" points="1781,1676 2030,1661 2279,1653 2528,1637 2777,1609 3026,1568 3275,1527"/>
<polyline class="ln" stroke="#777be5" stroke-width="4" points="2030,1710 2279,1709 2528,1712 2777,1712 3026,1713 3275,1713"/>
<g class="o"><circle cx="1781" cy="1398" r="4.500"/><circle cx="2030" cy="1404" r="4.500"/><circle cx="2279" cy="1402" r="4.500"/><circle cx="2528" cy="1400" r="4.500"/><circle cx="2777" cy="1400" r="4.500"/><circle cx="3026" cy="1404" r="4.500"/><circle cx="3275" cy="1405" r="4.500"/></g>
<g fill="#f6c54e"><circle cx="1781" cy="1676" r="4.500"/><circle cx="2030" cy="1661" r="4.500"/><circle cx="2279" cy="1653" r="4.500"/><circle cx="2528" cy="1637" r="4.500"/><circle cx="2777" cy="1609" r="4.500"/><circle cx="3026" cy="1568" r="4.500"/><circle cx="3275" cy="1527" r="4.500"/></g>
<g class="b"><circle cx="2030" cy="1710" r="4.500"/><circle cx="2279" cy="1709" r="4.500"/><circle cx="2528" cy="1712" r="4.500"/><circle cx="2777" cy="1712" r="4.500"/><circle cx="3026" cy="1713" r="4.500"/><circle cx="3275" cy="1713" r="4.500"/></g>
</g>
<!-- card icons -->
<g fill="none" stroke="#a0a0a0" stroke-width="1.800"><ellipse cx="3346" cy="1295" rx="11.500" ry="5"/><path d="M3334.500 1295v18c0 7 23 7 23 0v-18M3334.500 1301c0 6 23 6 23 0M3334.500 1307c0 6 23 6 23 0"/></g>
<path d="M3384 1298v-7h7M3397 1291h7v7M3404 1306v7h-7M3391 1313h-7v-7" fill="none" stroke="#a8a8a8" stroke-width="2"/>
<!-- toolbar -->
<path d="M3036 1276V1240a8 8 0 0 1 8-8H3410a8 8 0 0 1 8 8V1276Z" fill="#888" fill-opacity=".58"/>
<path d="M3036 1275.500H3418" stroke="#fbe09a" stroke-width="2"/>
<g class="tool">
<rect x="3057.500" y="1256" width="17" height="13" rx="2"/><path d="M3060 1256v-8a6 6 0 0 1 12 0"/>
<path d="M3121 1250a10 10 0 1 0 1 11M3115 1245l7 5-4 7"/>
<path d="M3158 1245v20M3151 1258l7 7 7-7M3148 1269h20"/>
<path d="M3194 1244h20M3204 1249v20M3197 1256l7-7 7 7"/>
<rect x="3240" y="1245" width="17" height="19" rx="2"/><path d="M3261 1250v16a2 2 0 0 1-2 2h-15"/>
<circle cx="3289" cy="1265" r="4"/><circle cx="3303" cy="1265" r="4"/><path d="M3291 1262l13-17M3301 1262l-13-17"/>
<rect x="3333" y="1245" width="16" height="8"/><path d="M3349 1249h3v8h-10v5"/><rect x="3340" y="1262" width="4" height="9" rx="2"/>
<path d="M3380 1248l16 17M3396 1248l-16 17"/>
</g>
<!-- handles -->
<g fill="#b4b4b4"><rect x="1466" y="1268" width="16" height="16"/><rect x="2440" y="1268" width="16" height="16"/><rect x="3412" y="1268" width="16" height="16"/><rect x="1466" y="1548" width="16" height="16"/><rect x="3412" y="1548" width="16" height="16"/><rect x="1466" y="1828" width="16" height="16"/><rect x="2440" y="1828" width="16" height="16"/><rect x="3412" y="1828" width="16" height="16"/></g>

<!-- right edge shade -->
<linearGradient id="sh" x1="0" x2="1" y1="0" y2="0"><stop offset="0" stop-color="#000" stop-opacity="0"/><stop offset="1" stop-color="#000" stop-opacity=".09"/></linearGradient>
<rect x="3420" y="0" width="50" height="2102" fill="url(#sh)"/>

<!-- red annotations -->
<rect x="191" y="840" width="151" height="38" rx="8" fill="none" stroke="#ea4126" stroke-width="5"/>
<rect x="176.500" y="963.500" width="353" height="214" rx="8" fill="none" stroke="#ea4126" stroke-width="5"/>
<path d="M623 450L621 511L610 495L373 830Q368 833 366 827L577 503L566 475Z" fill="#ee4127"/>
<path d="M681 797L681 862L663 845L570 999Q564 1003 561 997L643 835L625 827Z" fill="#ee4127"/>
</svg>
</body></html>
